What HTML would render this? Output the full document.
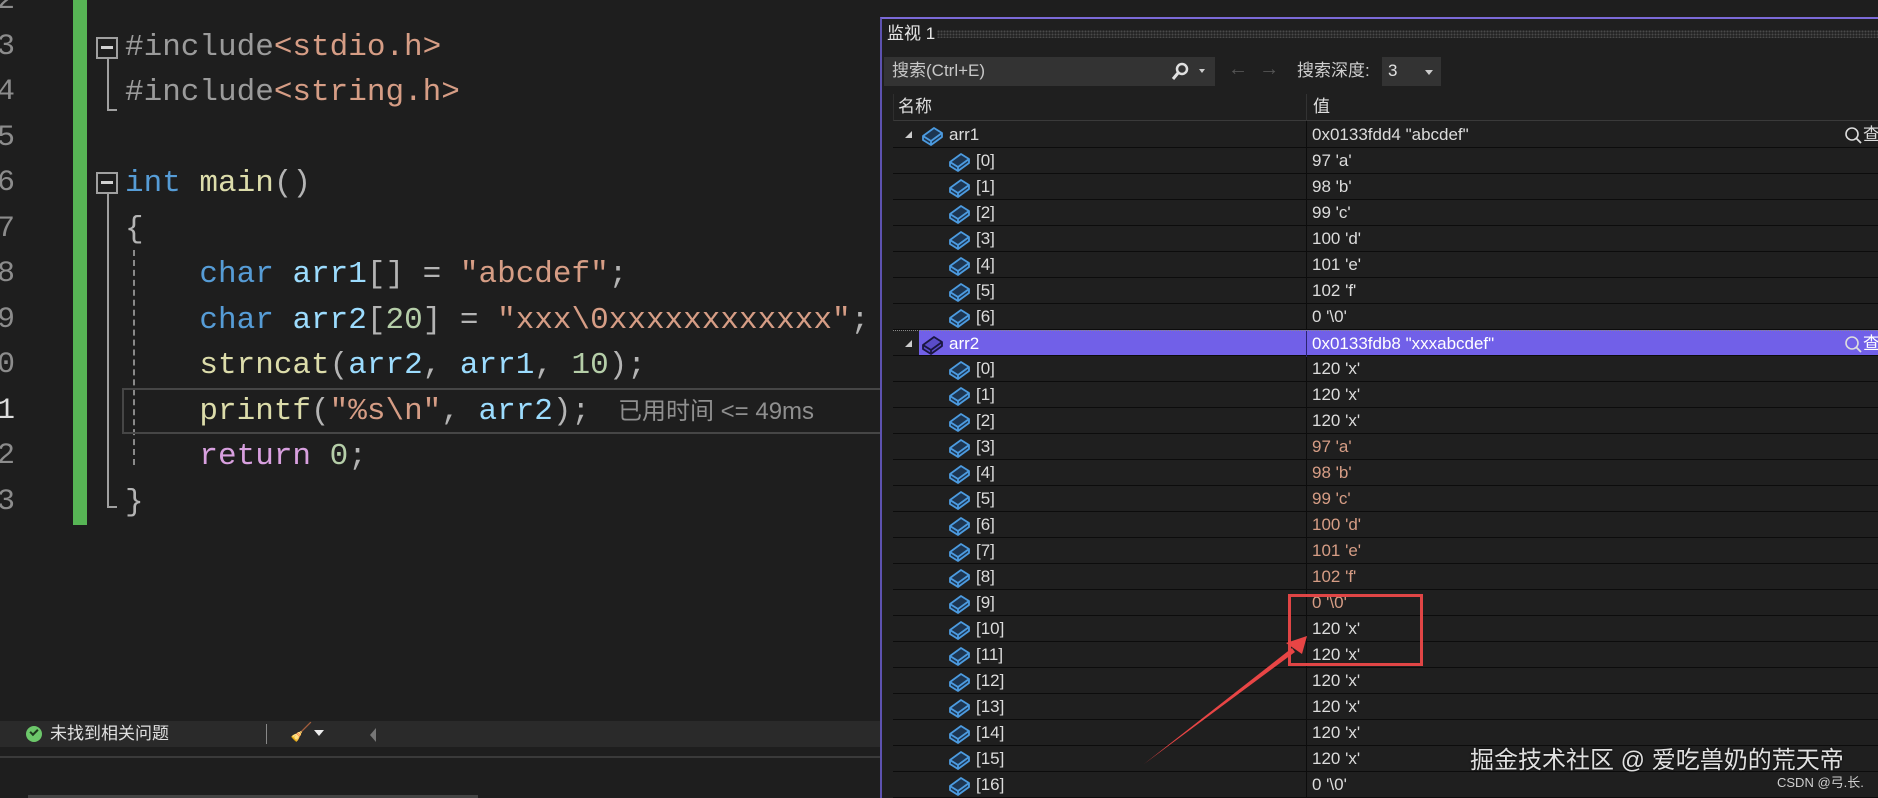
<!DOCTYPE html>
<html><head><meta charset="utf-8"><style>
*{margin:0;padding:0;box-sizing:border-box}
body{width:1878px;height:798px;background:#1e1e1e;overflow:hidden;position:relative;font-family:"Liberation Sans","Noto Sans CJK SC",sans-serif}
.ln{position:absolute;left:-3px;font:30px/45px "Liberation Mono",monospace;color:#8c8c8c;letter-spacing:-2px}
.cl{position:absolute;left:125px;font:31px/45px "Liberation Mono",monospace;color:#b4b4b4;white-space:pre;height:45px}
.k{color:#569cd6}.f{color:#dcdcaa}.v{color:#9cdcfe}.s{color:#d69d85}.n{color:#b5cea8}.p{color:#9b9b9b}.r{color:#d8a0df}
.row{position:absolute;left:893px;width:985px;height:26px;border-bottom:1px solid #0c0c0c}
.nm{position:absolute;font-size:17px;line-height:25px;color:#dcdcdc;white-space:nowrap}
.val{position:absolute;left:419px;font-size:17px;line-height:25px;color:#dcdcdc;white-space:pre}
.red{color:#d69d85}
.ic{position:absolute;top:3px}
</style></head><body>

<div style="position:absolute;left:73px;top:0;width:14px;height:525px;background:#57b555"></div>

<div class="ln" style="top:-21px">2</div>
<div class="ln" style="top:25px">3</div>
<div class="ln" style="top:70px">4</div>
<div class="ln" style="top:116px">5</div>
<div class="ln" style="top:161px">6</div>
<div class="ln" style="top:207px">7</div>
<div class="ln" style="top:252px">8</div>
<div class="ln" style="top:298px">9</div>
<div class="ln" style="top:343px">0</div>
<div class="ln" style="top:389px;color:#ddd">1</div>
<div class="ln" style="top:434px">2</div>
<div class="ln" style="top:480px">3</div>

<div style="position:absolute;left:96px;top:37px;width:22px;height:22px;border:2px solid #a0a0a0"></div>
<div style="position:absolute;left:101px;top:46px;width:12px;height:3px;background:#d0d0d0"></div>
<div style="position:absolute;left:107px;top:59px;width:2px;height:52px;background:#a0a0a0"></div>
<div style="position:absolute;left:107px;top:109px;width:10px;height:2px;background:#a0a0a0"></div>
<div style="position:absolute;left:96px;top:172px;width:22px;height:22px;border:2px solid #a0a0a0"></div>
<div style="position:absolute;left:101px;top:181px;width:12px;height:3px;background:#d0d0d0"></div>
<div style="position:absolute;left:107px;top:194px;width:2px;height:314px;background:#a0a0a0"></div>
<div style="position:absolute;left:107px;top:506px;width:10px;height:2px;background:#a0a0a0"></div>
<div style="position:absolute;left:133px;top:250px;width:0;height:215px;border-left:2px dashed #8a8a8a"></div>

<div style="position:absolute;left:122px;top:388px;width:770px;height:46px;border:2px solid #464646"></div>

<div class="cl" style="top:25px"><span class="p">#include</span><span class="s">&lt;stdio.h&gt;</span></div>
<div class="cl" style="top:70px"><span class="p">#include</span><span class="s">&lt;string.h&gt;</span></div>
<div class="cl" style="top:161px"><span class="k">int</span> <span class="f">main</span>()</div>
<div class="cl" style="top:207px">{</div>
<div class="cl" style="top:252px">    <span class="k">char</span> <span class="v">arr1</span>[] = <span class="s">"abcdef"</span>;</div>
<div class="cl" style="top:298px">    <span class="k">char</span> <span class="v">arr2</span>[<span class="n">20</span>] = <span class="s">"xxx\0xxxxxxxxxxxx"</span>;</div>
<div class="cl" style="top:343px">    <span class="f">strncat</span>(<span class="v">arr2</span>, <span class="v">arr1</span>, <span class="n">10</span>);</div>
<div class="cl" style="top:389px">    <span class="f">printf</span>(<span class="s">"%s\n"</span>, <span class="v">arr2</span>);</div>
<div style="position:absolute;left:618px;top:398px;font-size:24px;line-height:28px;color:#8f8f8f;white-space:pre">已用时间 &lt;= 49ms</div>
<div class="cl" style="top:434px">    <span class="r">return</span> <span class="n">0</span>;</div>
<div class="cl" style="top:480px">}</div>

<div style="position:absolute;left:0;top:721px;width:880px;height:26px;background:#2a2a2a"></div>
<div style="position:absolute;left:26px;top:726px;width:16px;height:16px;border-radius:50%;background:#6cc76a"></div>
<div style="position:absolute;left:30px;top:729px;width:8px;height:5px;border-left:2px solid #1e3a1e;border-bottom:2px solid #1e3a1e;transform:rotate(-45deg)"></div>
<div style="position:absolute;left:50px;top:723px;font-size:17px;line-height:22px;color:#e0e0e0">未找到相关问题</div>
<div style="position:absolute;left:266px;top:724px;width:1px;height:20px;background:#888"></div>
<div style="position:absolute;left:290px;top:722px;font-size:18px;color:#d8c07a">🧹</div>
<div style="position:absolute;left:314px;top:730px;width:0;height:0;border-left:5px solid transparent;border-right:5px solid transparent;border-top:6px solid #eee"></div>
<div style="position:absolute;left:370px;top:728px;width:0;height:0;border-top:7px solid transparent;border-bottom:7px solid transparent;border-right:6px solid #777"></div>
<div style="position:absolute;left:0;top:756px;width:880px;height:2px;background:#3a3a3a"></div>
<div style="position:absolute;left:28px;top:795px;width:450px;height:3px;background:#444"></div>

<div style="position:absolute;left:880px;top:17px;width:998px;height:781px;background:#1f1f1f;border-top:2px solid #7b6ad8;border-left:2px solid #5d52b0"></div>
<div style="position:absolute;left:887px;top:23px;font-size:17px;line-height:22px;color:#e6e6e6;white-space:nowrap">监视 1</div>
<div style="position:absolute;left:937px;top:30px;width:941px;height:8px;background-image:radial-gradient(#4a4a4a 1px,transparent 1.2px);background-size:3px 3px"></div>

<div style="position:absolute;left:884px;top:57px;width:331px;height:29px;background:#333333"></div>
<div style="position:absolute;left:892px;top:60px;font-size:17px;line-height:22px;color:#c8c8c8">搜索(Ctrl+E)</div>
<svg style="position:absolute;left:1170px;top:62px" width="40" height="20"><circle cx="12" cy="7" r="5" fill="none" stroke="#e0e0e0" stroke-width="2.5"/><line x1="8" y1="11" x2="3" y2="17" stroke="#e0e0e0" stroke-width="3"/><path d="M29 7 L35 7 L32 11 Z" fill="#ccc"/></svg>
<div style="position:absolute;left:1228px;top:58px;font-size:20px;color:#555">←&nbsp;&nbsp;→</div>
<div style="position:absolute;left:1297px;top:60px;font-size:17px;line-height:22px;color:#cfcfcf">搜索深度:</div>
<div style="position:absolute;left:1382px;top:57px;width:59px;height:29px;background:#333333"></div>
<div style="position:absolute;left:1388px;top:60px;font-size:17px;line-height:22px;color:#e0e0e0">3</div>
<div style="position:absolute;left:1425px;top:70px;width:0;height:0;border-left:4px solid transparent;border-right:4px solid transparent;border-top:5px solid #ccc"></div>

<div style="position:absolute;left:893px;top:94px;width:985px;height:27px;border-bottom:1px solid #3a3a3a;border-left:1px solid #2e2e2e"></div>
<div style="position:absolute;left:898px;top:96px;font-size:17px;line-height:22px;color:#e0e0e0">名称</div>
<div style="position:absolute;left:1313px;top:96px;font-size:17px;line-height:22px;color:#e0e0e0">值</div>
<div style="position:absolute;left:1306px;top:94px;width:1px;height:704px;background:#0c0c0c"></div>
<div style="position:absolute;left:1306px;top:94px;width:1px;height:27px;background:#333"></div>

<svg width="0" height="0" style="position:absolute"><defs>
<g id="bx"><path d="M2 11 L13 3 L21 8 L21 12 L10 20 L2 15 Z" fill="#1d3550" stroke="#4c9be0" stroke-width="1.8" stroke-linejoin="round"/><path d="M2 11 L10 16 L21 8 M10 16 L10 20" fill="none" stroke="#4c9be0" stroke-width="1.8"/></g>
<g id="bxs"><path d="M2 11 L13 3 L21 8 L21 12 L10 20 L2 15 Z" fill="#5a4cc8" stroke="#1a1640" stroke-width="1.8" stroke-linejoin="round"/><path d="M2 11 L10 16 L21 8 M10 16 L10 20" fill="none" stroke="#1a1640" stroke-width="1.8"/></g>
<g id="mg"><circle cx="8" cy="8" r="6" fill="none" stroke="#ddd" stroke-width="1.6"/><line x1="12" y1="12" x2="17" y2="17" stroke="#ddd" stroke-width="1.8"/></g>
</defs></svg>

<div class="row" style="top:122px"><div style="position:absolute;left:12px;top:9px;width:0;height:0;border-left:7px solid transparent;border-bottom:7px solid #ccc"></div><svg class="ic" style="left:28px" width="24" height="22"><use href="#bx"/></svg><div class="nm" style="left:56px">arr1</div><div class="val">0x0133fdd4 "abcdef"</div><svg style="position:absolute;left:951px;top:4px" width="19" height="19"><use href="#mg"/></svg><div class="nm" style="left:970px">查</div></div>
<div class="row" style="top:148px"><svg class="ic" style="left:55px" width="24" height="22"><use href="#bx"/></svg><div class="nm" style="left:83px">[0]</div><div class="val">97 'a'</div></div>
<div class="row" style="top:174px"><svg class="ic" style="left:55px" width="24" height="22"><use href="#bx"/></svg><div class="nm" style="left:83px">[1]</div><div class="val">98 'b'</div></div>
<div class="row" style="top:200px"><svg class="ic" style="left:55px" width="24" height="22"><use href="#bx"/></svg><div class="nm" style="left:83px">[2]</div><div class="val">99 'c'</div></div>
<div class="row" style="top:226px"><svg class="ic" style="left:55px" width="24" height="22"><use href="#bx"/></svg><div class="nm" style="left:83px">[3]</div><div class="val">100 'd'</div></div>
<div class="row" style="top:252px"><svg class="ic" style="left:55px" width="24" height="22"><use href="#bx"/></svg><div class="nm" style="left:83px">[4]</div><div class="val">101 'e'</div></div>
<div class="row" style="top:278px"><svg class="ic" style="left:55px" width="24" height="22"><use href="#bx"/></svg><div class="nm" style="left:83px">[5]</div><div class="val">102 'f'</div></div>
<div class="row" style="top:304px"><svg class="ic" style="left:55px" width="24" height="22"><use href="#bx"/></svg><div class="nm" style="left:83px">[6]</div><div class="val">0 '\0'</div></div>
<div class="row" style="top:330px;border-top:1px dotted #888;background:linear-gradient(to right,transparent 26px,#7160e8 26px)"><div style="position:absolute;left:12px;top:9px;width:0;height:0;border-left:7px solid transparent;border-bottom:7px solid #ccc"></div><svg class="ic" style="left:28px" width="24" height="22"><use href="#bxs"/></svg><div class="nm" style="left:56px;color:#fff">arr2</div><div style="position:absolute;left:413px;top:0;width:1px;height:26px;background:#2a2470"></div><div class="val" style="color:#fff">0x0133fdb8 "xxxabcdef"</div><svg style="position:absolute;left:951px;top:4px" width="19" height="19"><use href="#mg"/></svg><div class="nm" style="left:970px;color:#fff">查</div></div>
<div class="row" style="top:356px"><svg class="ic" style="left:55px" width="24" height="22"><use href="#bx"/></svg><div class="nm" style="left:83px">[0]</div><div class="val">120 'x'</div></div>
<div class="row" style="top:382px"><svg class="ic" style="left:55px" width="24" height="22"><use href="#bx"/></svg><div class="nm" style="left:83px">[1]</div><div class="val">120 'x'</div></div>
<div class="row" style="top:408px"><svg class="ic" style="left:55px" width="24" height="22"><use href="#bx"/></svg><div class="nm" style="left:83px">[2]</div><div class="val">120 'x'</div></div>
<div class="row" style="top:434px"><svg class="ic" style="left:55px" width="24" height="22"><use href="#bx"/></svg><div class="nm" style="left:83px">[3]</div><div class="val red">97 'a'</div></div>
<div class="row" style="top:460px"><svg class="ic" style="left:55px" width="24" height="22"><use href="#bx"/></svg><div class="nm" style="left:83px">[4]</div><div class="val red">98 'b'</div></div>
<div class="row" style="top:486px"><svg class="ic" style="left:55px" width="24" height="22"><use href="#bx"/></svg><div class="nm" style="left:83px">[5]</div><div class="val red">99 'c'</div></div>
<div class="row" style="top:512px"><svg class="ic" style="left:55px" width="24" height="22"><use href="#bx"/></svg><div class="nm" style="left:83px">[6]</div><div class="val red">100 'd'</div></div>
<div class="row" style="top:538px"><svg class="ic" style="left:55px" width="24" height="22"><use href="#bx"/></svg><div class="nm" style="left:83px">[7]</div><div class="val red">101 'e'</div></div>
<div class="row" style="top:564px"><svg class="ic" style="left:55px" width="24" height="22"><use href="#bx"/></svg><div class="nm" style="left:83px">[8]</div><div class="val red">102 'f'</div></div>
<div class="row" style="top:590px"><svg class="ic" style="left:55px" width="24" height="22"><use href="#bx"/></svg><div class="nm" style="left:83px">[9]</div><div class="val red">0 '\0'</div></div>
<div class="row" style="top:616px"><svg class="ic" style="left:55px" width="24" height="22"><use href="#bx"/></svg><div class="nm" style="left:83px">[10]</div><div class="val">120 'x'</div></div>
<div class="row" style="top:642px"><svg class="ic" style="left:55px" width="24" height="22"><use href="#bx"/></svg><div class="nm" style="left:83px">[11]</div><div class="val">120 'x'</div></div>
<div class="row" style="top:668px"><svg class="ic" style="left:55px" width="24" height="22"><use href="#bx"/></svg><div class="nm" style="left:83px">[12]</div><div class="val">120 'x'</div></div>
<div class="row" style="top:694px"><svg class="ic" style="left:55px" width="24" height="22"><use href="#bx"/></svg><div class="nm" style="left:83px">[13]</div><div class="val">120 'x'</div></div>
<div class="row" style="top:720px"><svg class="ic" style="left:55px" width="24" height="22"><use href="#bx"/></svg><div class="nm" style="left:83px">[14]</div><div class="val">120 'x'</div></div>
<div class="row" style="top:746px"><svg class="ic" style="left:55px" width="24" height="22"><use href="#bx"/></svg><div class="nm" style="left:83px">[15]</div><div class="val">120 'x'</div></div>
<div class="row" style="top:772px"><svg class="ic" style="left:55px" width="24" height="22"><use href="#bx"/></svg><div class="nm" style="left:83px">[16]</div><div class="val">0 '\0'</div></div>

<div style="position:absolute;left:1288px;top:594px;width:135px;height:72px;border:3px solid #e04545"></div>
<svg style="position:absolute;left:0;top:0" width="1878" height="798"><path d="M1144 764 L1292 648 L1295 652 Z" fill="#e84545"/><path d="M1307 636 L1286 643 L1302 654 Z" fill="#e84545"/></svg>

<div style="position:absolute;left:1470px;top:746px;font-size:24px;line-height:30px;color:#e0e0e0;white-space:pre;text-shadow:0 0 2px #000">掘金技术社区 @ 爱吃兽奶的荒天帝</div>
<div style="position:absolute;left:1777px;top:775px;font-size:13px;line-height:16px;color:#cfcfcf;white-space:nowrap">CSDN @弓.长.</div>
</body></html>
